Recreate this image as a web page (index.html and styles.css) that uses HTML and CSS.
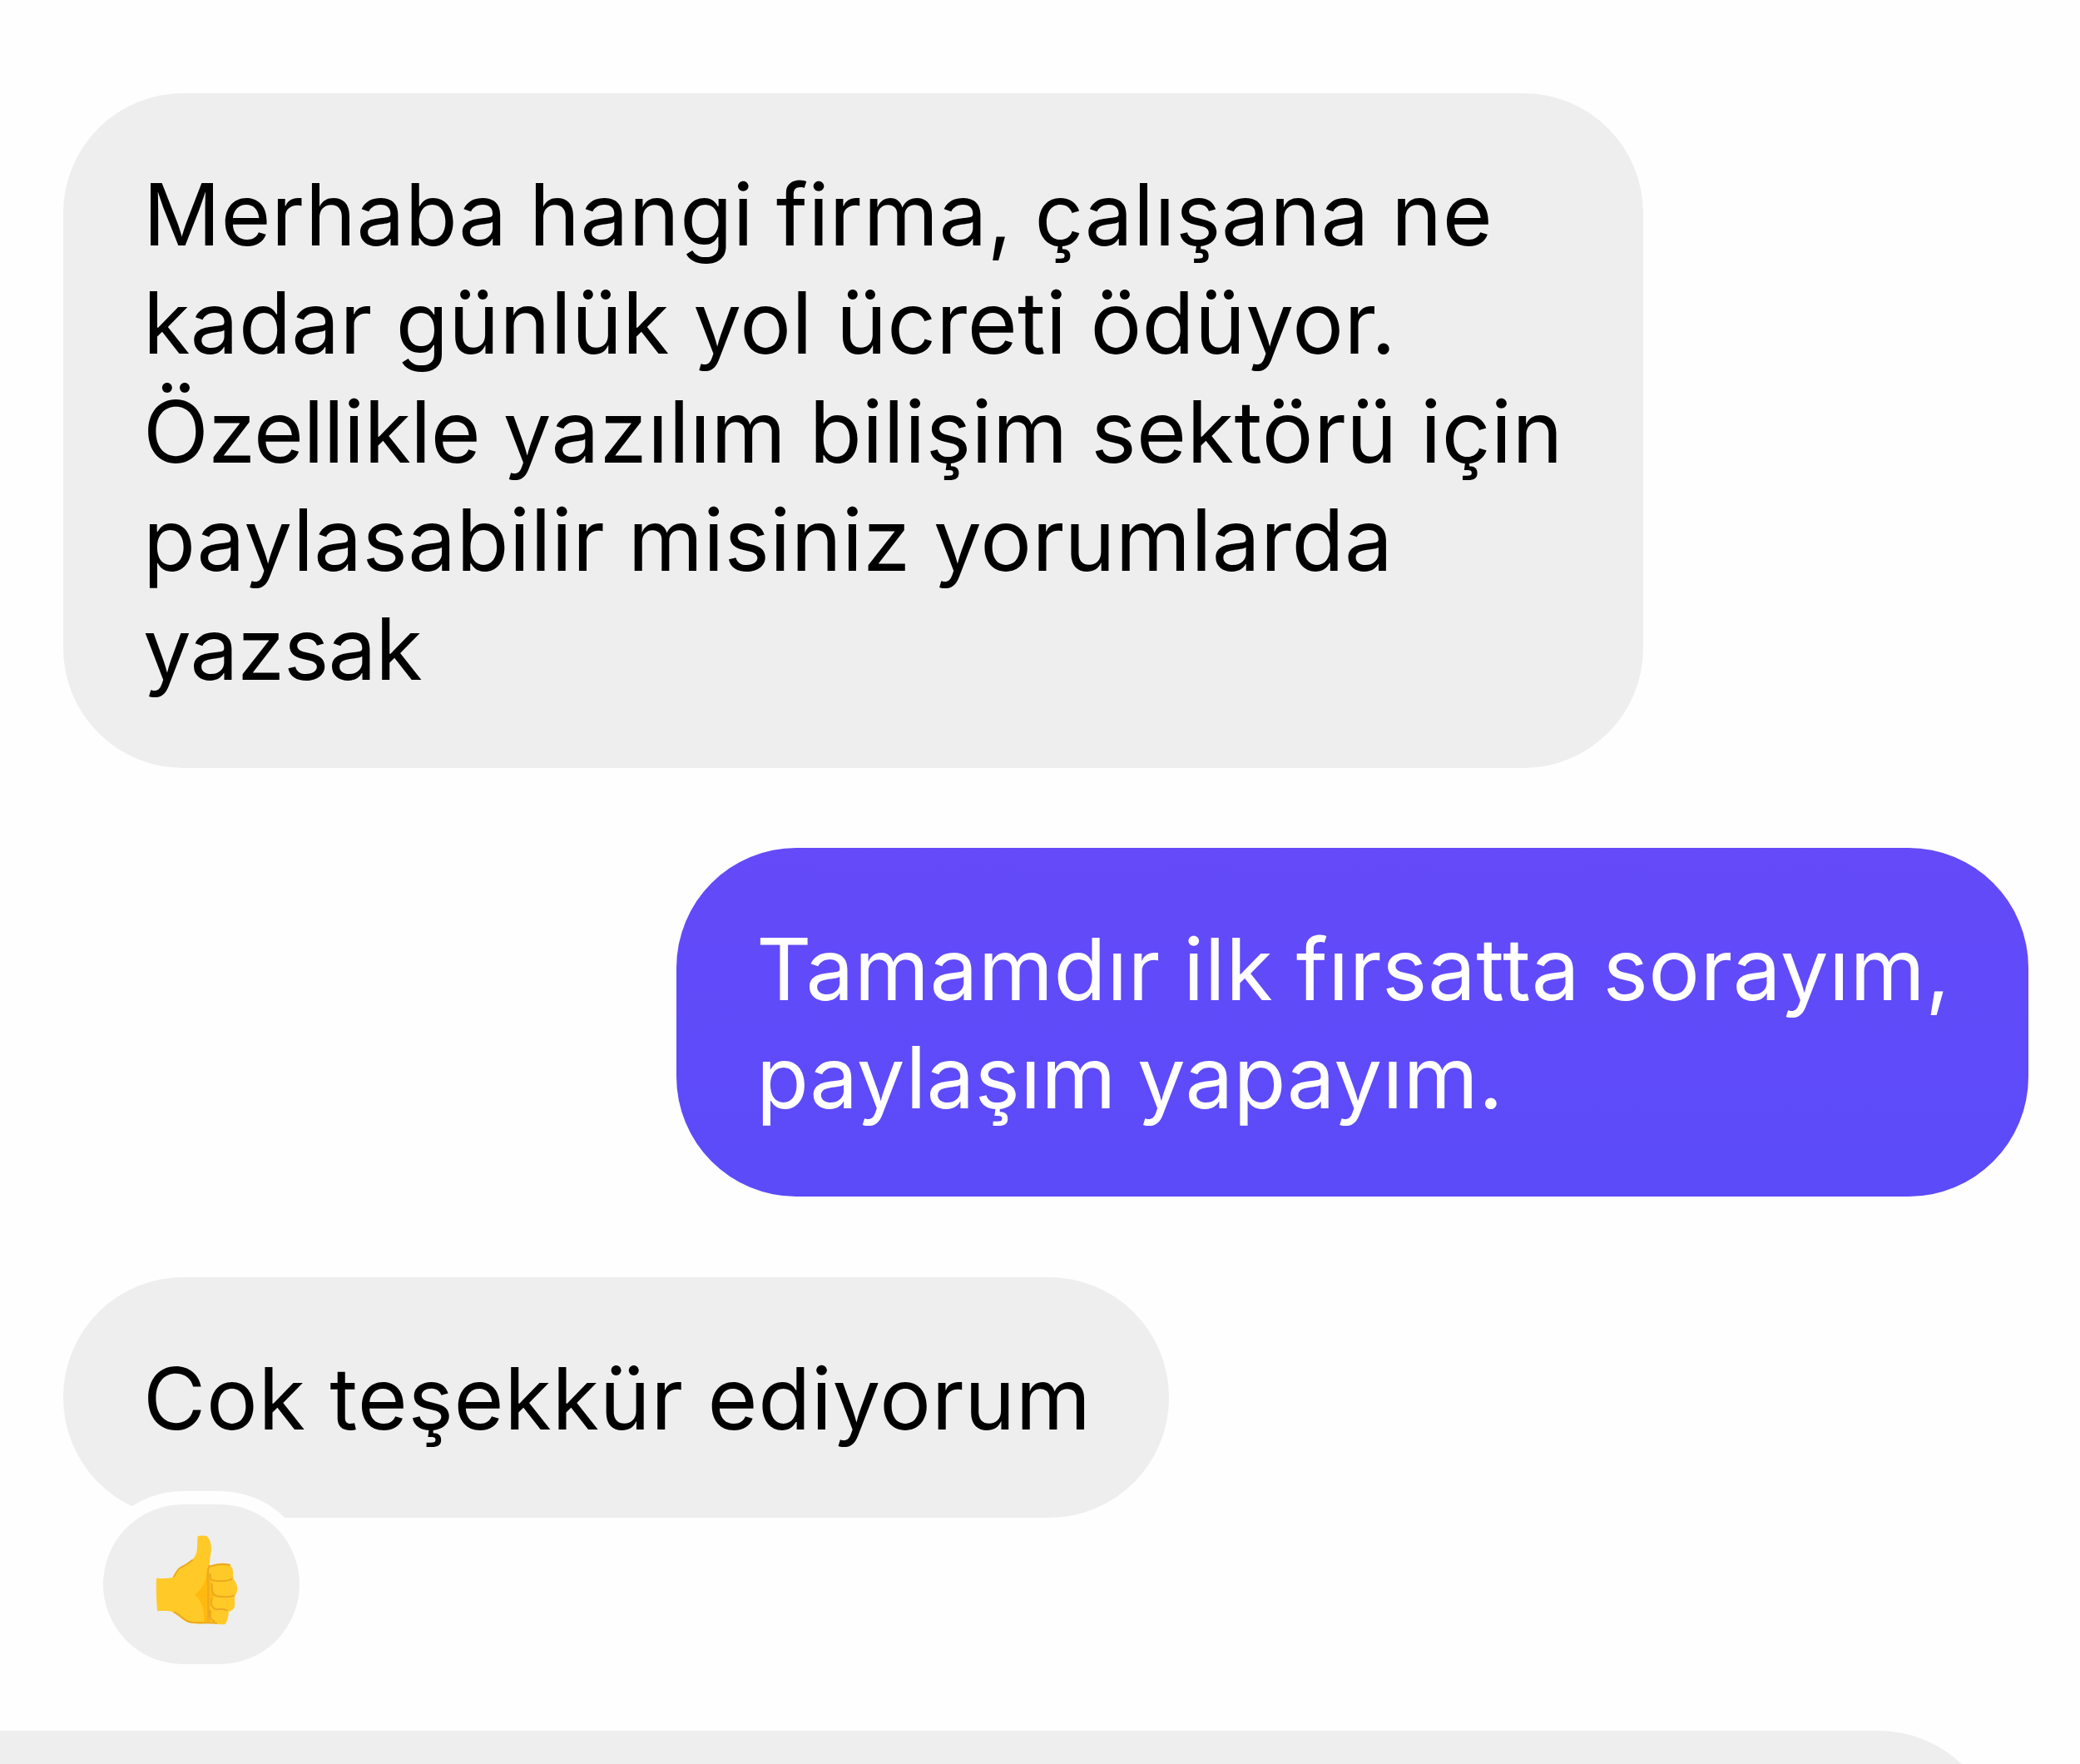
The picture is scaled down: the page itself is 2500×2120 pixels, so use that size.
FILE: index.html
```
<!DOCTYPE html>
<html lang="tr">
<head>
    <meta charset="UTF-8">
    <meta name="viewport" content="width=device-width, initial-scale=1.0">
    <title>Mesajlar</title>
    <link rel="stylesheet" href="styles.css">
</head>
<body>

    <div class="chat">
        <div class="message received">
            <span class="line l1">Merhaba hangi firma, çalışana ne</span>
            <span class="line l2">kadar günlük yol ücreti ödüyor.</span>
            <span class="line l3"><span class="tight">Özellikle</span> yazılım bilişim sektörü için</span>
            <span class="line l4">paylasabilir misiniz yorumlarda</span>
            <span class="line l5">yazsak</span>
        </div>

        <div class="message sent">
            <span class="line l6">Tamamdır ilk fırsatta sorayım,</span>
            <span class="line l7">paylaşım yapayım.</span>
        </div>

        <div class="message received short">
            <span class="line l8">Cok teşekkür ediyorum</span>
            <div class="reaction">
                <svg class="thumb" viewBox="380 190 300 330">
                    <path fill="#ffca28" d="M386 349 Q416 353 444 347 C454 334 458 318 474 309 C500 298 518 284 527 264 C535 243 530 218 534 199 Q550 196 565 199 C580 213 583 232 581 256 C578 275 575 290 576 306 C600 299 626 298 646 302 C657 308 661 320 660 337 C659 348 661 354 667 361 C677 378 678 397 667 412 C663 423 668 437 665 451 C662 463 652 466 644 470 C643 486 640 502 632 514 C610 517 590 511 574 511 C546 513 519 513 497 507 C475 498 460 479 440 469 Q414 464 389 467 Q383 406 386 349 Z"/>
                    <path fill="#ffb90f" d="M568 310 C564 345 560 372 541 391 Q532 401 522 409 Q536 419 544 436 C553 455 556 481 557 505 L580 508 L584 470 L577 455 L586 422 L592 414 L582 370 L578 345 Z"/>
                    <path class="crease" d="M448 344 C456 332 460 318 474 311 C490 303 504 294 514 285 M450 471 C473 481 480 498 503 506 C535 511 570 507 600 510"/>
                    <path class="crease" d="M576 308 C600 299 626 298 648 302 M574 306 C566 328 570 360 571 380 L571 500 M578 336 C576 352 582 358 596 359 C620 361 640 360 655 353 M584 370 C583 400 588 412 604 414 C625 416 645 420 661 412 M584 422 C578 445 585 458 600 461 Q620 458 638 464 M578 466 C573 487 580 498 592 503"/>
                </svg>
            </div>
        </div>

        <div class="message received next"></div>
    </div>

</body>
</html>
```
FILE: styles.css
```
body {
    margin: 0;
    background: #fefefe;
    font-family: "Inter", sans-serif;
    font-size: 103px;
    font-weight: 420;
    line-height: 130.4px;
    color: #000;
}

.chat {
    box-sizing: border-box;
    height: 2120px;
    padding: 112px 62px 0 76px;
    display: flex;
    flex-direction: column;
    align-items: flex-start;
    gap: 96.5px;
    overflow: hidden;
}

.message {
    box-sizing: border-box;
    flex-shrink: 0;
    padding: 81px 90px 77.5px 96px;
    border-radius: 144px;
}

.received {
    width: 1899px;
    background: #eeeeee;
}

.sent {
    align-self: flex-end;
    width: 1625px;
    background: linear-gradient(#644af9, #5b4bf9);
    color: #fff;
}

.short {
    position: relative;
    width: 1329px;
}

.line {
    display: block;
    white-space: nowrap;
    letter-spacing: 0.5px;
    word-spacing: -2px;
}

.l1 {
    word-spacing: -3px;
}

.l2 {
    letter-spacing: 0.3px;
    word-spacing: -1px;
}

.l4 {
    letter-spacing: 0.4px;
}

.l5 {
    letter-spacing: -1px;
}

.l7 {
    letter-spacing: 0.2px;
    word-spacing: -4px;
}

.l8 {
    letter-spacing: 0.7px;
    word-spacing: -1px;
}

.tight {
    letter-spacing: -0.6px;
}

/* sits on the lower edge of the bubble */
.reaction {
    position: absolute;
    left: 32px;
    top: 257px;
    width: 236px;
    height: 192px;
    box-sizing: content-box;
    border: 16px solid #fefefe;
    border-radius: 112px;
    background: #eeeeee;
    line-height: 0;
}

.thumb {
    width: 101px;
    height: 111px;
    margin: 35px 0 0 62px;
}

.crease {
    fill: none;
    stroke: #eca91f;
    stroke-width: 6;
    stroke-linecap: round;
}

/* next message, only its top is in view */
.next {
    width: 2562px;
    height: 400px;
    margin-top: 160px;
    margin-left: -236px;
}
```
